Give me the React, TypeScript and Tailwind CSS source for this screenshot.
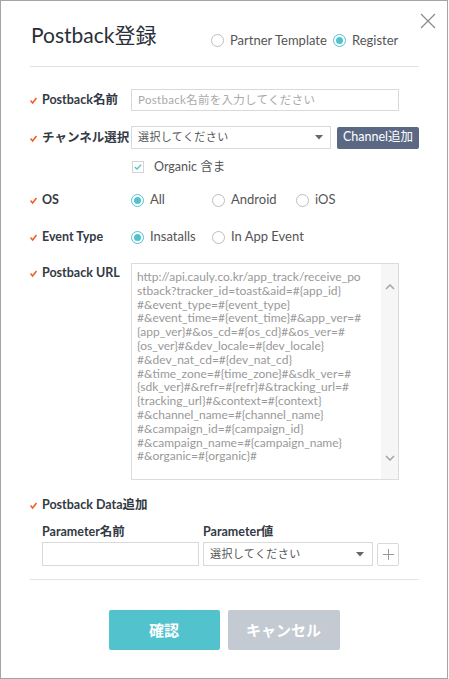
import React from 'react';

const urlLines = [
  'http://api.cauly.co.kr/app_track/receive_po',
  'stback?tracker_id=toast&aid=#{app_id}',
  '#&event_type=#{event_type}',
  '#&event_time=#{event_time}#&app_ver=#',
  '{app_ver}#&os_cd=#{os_cd}#&os_ver=#',
  '{os_ver}#&dev_locale=#{dev_locale}',
  '#&dev_nat_cd=#{dev_nat_cd}',
  '#&time_zone=#{time_zone}#&sdk_ver=#',
  '{sdk_ver}#&refr=#{refr}#&tracking_url=#',
  '{tracking_url}#&context=#{context}',
  '#&channel_name=#{channel_name}',
  '#&campaign_id=#{campaign_id}',
  '#&campaign_name=#{campaign_name}',
  '#&organic=#{organic}#',
];

function Check() {
  return (
    <svg width="12" height="8" viewBox="0 0 12 8" className="shrink-0 mt-[2px]">
      <polyline points="0.5,3.5 2.6,6 6.5,1" fill="none" stroke="#f15a24" strokeWidth="1.5" />
    </svg>
  );
}

function Radio({ label, checked = false, className = '' }: { label: string; checked?: boolean; className?: string }) {
  return (
    <span className={`flex items-center gap-[6px] text-[13px] text-[#555] ${className}`}>
      <span
        className={`w-[13px] h-[13px] rounded-full border flex items-center justify-center bg-white ${
          checked ? 'border-[#52c3cd]' : 'border-[#bdbdbd]'
        }`}
      >
        {checked && <span className="w-[7px] h-[7px] rounded-full bg-[#52c3cd]" />}
      </span>
      {label}
    </span>
  );
}

function Label({ children, wide = false }: { children: React.ReactNode; wide?: boolean }) {
  return (
    <div className={`${wide ? '' : 'w-[101px]'} shrink-0 flex items-center whitespace-nowrap`}>
      <Check />
      <span className="text-[12.5px] font-bold text-[#333a45] leading-[16px]">{children}</span>
    </div>
  );
}

function Arrow() {
  return (
    <svg width="8" height="5" viewBox="0 0 8 5" className="shrink-0">
      <polygon points="0,0 8,0 4,4.5" fill="#666" />
    </svg>
  );
}

export default function App() {
  return (
    <div className="relative w-[448px] h-[679px] border border-[#a4a4a4] bg-white pl-[29px] pr-[28px] font-['Lato','Noto_Sans_CJK_JP',sans-serif]">
      {/* close */}
      <svg width="16" height="16" viewBox="0 0 16 16" className="absolute left-[419px] top-[12px]">
        <path d="M1 1 L15 15 M15 1 L1 15" stroke="#8a8a8a" strokeWidth="1.2" fill="none" />
      </svg>

      <div className="flex items-center h-[40px] pt-[14px] pb-[4px] box-content">
        <h1 className="w-[181px] pl-[1px] text-[21px] leading-[28px] text-[#2b2f3a] shrink-0">Postback登録</h1>
        <div className="flex items-center mt-[11px]">
          <Radio label="Partner Template" className="w-[122px]" />
          <Radio label="Register" checked />
        </div>
      </div>
      <div className="mt-[7px] h-px bg-[#dde3ea]" />

      {/* name */}
      <div className="mt-[22px] flex items-center">
        <Label>Postback名前</Label>
        <div className="w-[268px] h-[22px] border border-[#d9d9d9] flex items-center pl-[6px] text-[11.5px] text-[#aaa] tracking-[0.3px]">
          Postback名前を入力してください
        </div>
      </div>

      {/* channel */}
      <div className="mt-[15px] flex items-center">
        <Label>チャンネル選択</Label>
        <div className="w-[200px] h-[23px] border border-[#d9d9d9] flex items-center justify-between pl-[6px] pr-[7px] text-[11px] text-[#555] tracking-[0.4px]">
          <span>選択してください</span>
          <Arrow />
        </div>
        <button className="ml-[6px] w-[82px] h-[22px] rounded-[2px] bg-[#5a6883] text-white text-[12.5px] flex items-center justify-center whitespace-nowrap">
          Channel追加
        </button>
      </div>

      {/* organic */}
      <div className="mt-[10px] h-[16px] flex items-center pl-[102px]">
        <span className="w-[12px] h-[12px] border border-[#d4d4d4] flex items-center justify-center bg-white">
          <svg width="8" height="6" viewBox="0 0 8 6">
            <polyline points="0.8,3 3,5 7.2,0.8" fill="none" stroke="#52c3cd" strokeWidth="1.3" />
          </svg>
        </span>
        <span className="ml-[10px] text-[12.5px] text-[#555]">Organic 含ま</span>
      </div>

      {/* OS */}
      <div className="mt-[17px] h-[16px] flex items-center">
        <Label>OS</Label>
        <Radio label="All" checked className="w-[81px]" />
        <Radio label="Android" className="w-[84px]" />
        <Radio label="iOS" />
      </div>

      {/* event */}
      <div className="mt-[21px] h-[16px] flex items-center">
        <Label>Event Type</Label>
        <Radio label="Insatalls" checked className="w-[81px]" />
        <Radio label="In App Event" />
      </div>

      {/* URL */}
      <div className="mt-[18px] flex items-start">
        <div className="pt-[2px]">
          <Label>Postback URL</Label>
        </div>
        <div className="w-[268px] h-[217px] border border-[#dcdcdc] flex">
          <div className="flex-1 pl-[5px] pt-[6px] text-[12px] leading-[13.8px] text-[#999] whitespace-nowrap overflow-hidden">
            {urlLines.map((l) => (
              <div key={l}>{l}</div>
            ))}
          </div>
          <div className="w-[17px] bg-[#f6f6f6] flex flex-col items-center justify-between pt-[20px] pb-[18px]">
            <svg width="10" height="6" viewBox="0 0 10 6">
              <polyline points="1,5 5,1 9,5" fill="none" stroke="#a8a8a8" strokeWidth="1.6" />
            </svg>
            <svg width="10" height="6" viewBox="0 0 10 6">
              <polyline points="1,1 5,5 9,1" fill="none" stroke="#a8a8a8" strokeWidth="1.6" />
            </svg>
          </div>
        </div>
      </div>

      {/* data */}
      <div className="mt-[17px] h-[16px] flex items-center">
        <Label wide>Postback Data追加</Label>
      </div>
      <div className="pl-[12px]">
        <div className="mt-[11px] h-[16px] flex items-center text-[12.5px] font-bold text-[#333a45]">
          <span className="w-[161px]">Parameter名前</span>
          <span>Parameter値</span>
        </div>
        <div className="mt-[2px] flex items-center gap-[4px]">
          <div className="w-[157px] h-[24px] border border-[#d9d9d9]" />
          <div className="w-[170px] h-[24px] border border-[#d9d9d9] flex items-center justify-between pl-[6px] pr-[8px] text-[11px] text-[#555] tracking-[0.4px]">
            <span>選択してください</span>
            <Arrow />
          </div>
          <div className="w-[22px] h-[23px] border border-[#d9d9d9] rounded-[2px] flex items-center justify-center">
            <svg width="11" height="11" viewBox="0 0 11 11">
              <path d="M5.5 0 V11 M0 5.5 H11" stroke="#999" strokeWidth="1" />
            </svg>
          </div>
        </div>
      </div>
      <div className="mt-[13px] h-px bg-[#dde3ea]" />

      {/* buttons */}
      <div className="mt-[30px] flex justify-center gap-[8px] -ml-[1px]">
        <button className="w-[111px] h-[40px] rounded-[2px] bg-[#52c3cd] text-white text-[15px] font-bold">確認</button>
        <button className="w-[112px] h-[40px] rounded-[2px] bg-[#c4cad2] text-white text-[15px] font-bold">キャンセル</button>
      </div>
    </div>
  );
}
